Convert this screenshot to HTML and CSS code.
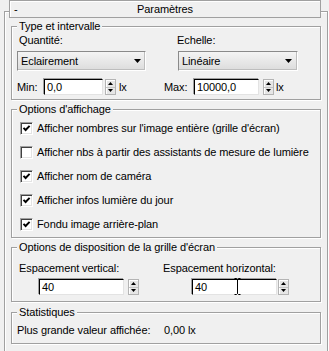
FILE: index.html
```html
<!DOCTYPE html>
<html lang="fr">
<head>
<meta charset="utf-8">
<title>Paramètres</title>
<link rel="stylesheet" href="styles.css">
</head>
<body>
<div class="frame">
  <div class="header">
    <span class="minus">-</span>
    <span class="title">Paramètres</span>
    <span></span>
  </div>

  <div class="group g1">
    <div class="legend">Type et intervalle</div>
    <div class="body b1">
      <div class="row labels">
        <span class="lq">Quantité:</span>
        <span>Echelle:</span>
      </div>
      <div class="row drops">
        <div class="dd dd1"><span>Eclairement</span><svg width="7" height="4" viewBox="0 0 7 4"><path d="M0 0H7L3.5 4Z" fill="#000"/></svg></div>
        <div class="dd dd2"><span>Linéaire</span><svg width="7" height="4" viewBox="0 0 7 4"><path d="M0 0H7L3.5 4Z" fill="#000"/></svg></div>
      </div>
      <div class="row range">
        <div class="cell c-min">
          <span class="rl rl-min">Min:</span>
          <div class="input in-min">0,0</div>
          <div class="spin sp-min"><span class="b"><svg width="5" height="3" viewBox="0 0 5 3"><path d="M2.5 0L5 3H0Z" fill="#000"/></svg></span><span class="b"><svg width="5" height="3" viewBox="0 0 5 3"><path d="M0 0H5L2.5 3Z" fill="#000"/></svg></span></div>
          <span class="unit">lx</span>
        </div>
        <div class="cell c-max">
          <span class="rl rl-max">Max:</span>
          <div class="input in-max">10000,0</div>
          <div class="spin sp-max"><span class="b"><svg width="5" height="3" viewBox="0 0 5 3"><path d="M2.5 0L5 3H0Z" fill="#000"/></svg></span><span class="b"><svg width="5" height="3" viewBox="0 0 5 3"><path d="M0 0H5L2.5 3Z" fill="#000"/></svg></span></div>
          <span class="unit unit-max">lx</span>
        </div>
      </div>
    </div>
  </div>

  <div class="group g2">
    <div class="legend">Options d'affichage</div>
    <div class="body b2">
      <label class="check"><span class="cb on"><svg width="9" height="9" viewBox="0 0 9 9"><path d="M1.5 3.8L3.6 6L7.6 1.8" fill="none" stroke="#000" stroke-width="1.9"/></svg></span>Afficher nombres sur l'image entière (grille d'écran)</label>
      <label class="check"><span class="cb"></span>Afficher nbs à partir des assistants de mesure de lumière</label>
      <label class="check"><span class="cb on"><svg width="9" height="9" viewBox="0 0 9 9"><path d="M1.5 3.8L3.6 6L7.6 1.8" fill="none" stroke="#000" stroke-width="1.9"/></svg></span>Afficher nom de caméra</label>
      <label class="check"><span class="cb on"><svg width="9" height="9" viewBox="0 0 9 9"><path d="M1.5 3.8L3.6 6L7.6 1.8" fill="none" stroke="#000" stroke-width="1.9"/></svg></span>Afficher infos lumière du jour</label>
      <label class="check"><span class="cb on"><svg width="9" height="9" viewBox="0 0 9 9"><path d="M1.5 3.8L3.6 6L7.6 1.8" fill="none" stroke="#000" stroke-width="1.9"/></svg></span>Fondu image arrière-plan</label>
    </div>
  </div>

  <div class="group g3">
    <div class="legend">Options de disposition de la grille d'écran</div>
    <div class="body b3">
      <div class="row labels3">
        <span class="lv">Espacement vertical:</span>
        <span>Espacement horizontal:</span>
      </div>
      <div class="row spacing">
        <div class="input in-v">40</div>
        <div class="spin sp-v"><span class="b"><svg width="5" height="3" viewBox="0 0 5 3"><path d="M2.5 0L5 3H0Z" fill="#000"/></svg></span><span class="b"><svg width="5" height="3" viewBox="0 0 5 3"><path d="M0 0H5L2.5 3Z" fill="#000"/></svg></span></div>
        <div class="input in-h">40</div>
        <div class="spin sp-h"><span class="b"><svg width="5" height="3" viewBox="0 0 5 3"><path d="M2.5 0L5 3H0Z" fill="#000"/></svg></span><span class="b"><svg width="5" height="3" viewBox="0 0 5 3"><path d="M0 0H5L2.5 3Z" fill="#000"/></svg></span></div>
      </div>
    </div>
  </div>

  <div class="group g4">
    <div class="legend">Statistiques</div>
    <div class="body b4">
      <div class="row stat"><span class="sl">Plus grande valeur affichée:</span><span>0,00 lx</span></div>
    </div>
  </div>
</div>
<svg class="ibeam" width="7" height="17" viewBox="0 0 7 17"><path d="M0.5 0.5H2.5L3.5 1.5L4.5 0.5H6.5M3.5 1.5V15.5M0.5 16.5H2.5L3.5 15.5L4.5 16.5H6.5" fill="none" stroke="#000" stroke-width="1"/></svg>
</body>
</html>
```
FILE: styles.css
```css
* { box-sizing: border-box; }
html, body { margin: 0; padding: 0; }
body {
  width: 329px;
  height: 351px;
  overflow: hidden;
  position: relative;
  background: #f0f0f0;
  color: #000;
  font-family: "Liberation Sans", Arial, sans-serif;
  font-size: 11px;
  letter-spacing: -0.1px;
  line-height: 14px;
}
.frame {
  margin: 11px 0 0 4px;
  width: 324px;
  height: 340px;
  border: 1px solid #a0a0a0;
  border-bottom: none;
  box-shadow: inset 1px 1px 0 #fff, 1px 0 0 #fff;
}
.header {
  margin: -12px 6px 0 4px;
  height: 18px;
  border: 1px solid #a0a0a0;
  box-shadow: inset 1px 1px 0 #fff;
  background: #f0f0f0;
  display: grid;
  grid-template-columns: 30px 1fr 30px;
  align-items: center;
}
.minus { padding-left: 4px; }
.title { text-align: center; }

.group {
  margin: 0 6px;
  border: 1px solid #a0a0a0;
  box-shadow: inset 1px 1px 0 #fff, 1px 1px 0 #fff;
}
.legend {
  width: max-content;
  margin: -8px 0 0 5px;
  padding: 0 2px;
  line-height: 14px;
  height: 14px;
  background: #f0f0f0;
  position: relative;
}
.g1 { margin-top: 8px; padding-bottom: 4px; }
.g2 { margin-top: 9px; padding-bottom: 1px; }
.g3 { margin-top: 9px; padding-bottom: 6px; }
.g4 { margin-top: 10px; padding-bottom: 6px; }

.row { display: flex; align-items: center; }

/* group 1 */
.b1 { padding-left: 5px; }
.labels { height: 14px; }
.lq { margin-left: 2px; width: 158px; }
.drops { margin-top: 4px; }
.dd {
  height: 20px;
  display: flex;
  align-items: center;
  justify-content: space-between;
  padding: 0 4px 0 3px;
  border: 1px solid;
  border-color: #8a8a8a #fff #fff #8a8a8a;
  box-shadow: inset -1px -1px 0 #bdbdbd;
  background: linear-gradient(#f4f4f4, #dcdcdc);
}
.dd1 { width: 129px; margin-right: 32px; }
.dd2 { width: 120px; padding-right: 5px; }
.range { margin-top: 8px; height: 16px; }
.cell { display: flex; align-items: center; }
.c-min { width: 147px; }
.rl-min { width: 27px; }
.rl-max { width: 30px; }
.input {
  height: 16px;
  background: #fff;
  border: 1px solid;
  border-color: #000 #e3e3e3 #e3e3e3 #000;
  box-shadow: -1px -1px 0 #a0a0a0;
  padding-left: 2px;
  line-height: 14px;
}
.in-min { width: 59px; }
.in-max { width: 65px; }
.spin {
  width: 11px;
  height: 16px;
  display: flex;
  flex-direction: column;
  border: 1px solid #b4b4b4;
  background: #e6e6e6;
  box-shadow: inset 1px 1px 0 #fff;
}
.spin .b {
  flex: 1;
  display: flex;
  align-items: center;
  justify-content: center;
}
.spin .b + .b { border-top: 1px solid #c4c4c4; }
.spin svg { display: block; }
.sp-min { margin-left: 2px; }
.sp-max { margin-left: 4px; }
.unit { margin-left: 3px; }
.unit-max { margin-left: 2px; }

/* group 2 */
.b2 { padding-left: 8px; }
.check {
  height: 24px;
  display: flex;
  align-items: center;
}
.cb {
  width: 13px;
  height: 13px;
  margin-right: 4px;
  background: #fff;
  border: 1px solid;
  border-color: #a0a0a0 #fff #fff #a0a0a0;
  box-shadow: inset 1px 1px 0 #404040, inset -1px -1px 0 #e3e3e3;
  display: flex;
  align-items: center;
  justify-content: center;
}
.cb svg { display: block; }

/* group 3 */
.b3 { padding-left: 7px; }
.labels3 { margin-top: 7px; height: 14px; }
.lv { width: 144px; }
.spacing { margin-top: 4px; height: 16px; }
.in-v { width: 85px; margin-left: 20px; }
.sp-v { margin-left: 4px; }
.in-h { width: 85px; margin-left: 53px; }
.sp-h { margin-left: 1px; }

/* group 4 */
.b4 { padding-left: 5px; }
.stat { margin-top: 4px; height: 14px; }
.sl { width: 147px; }

.ibeam {
  position: absolute;
  left: 234px;
  top: 278px;
}
```
